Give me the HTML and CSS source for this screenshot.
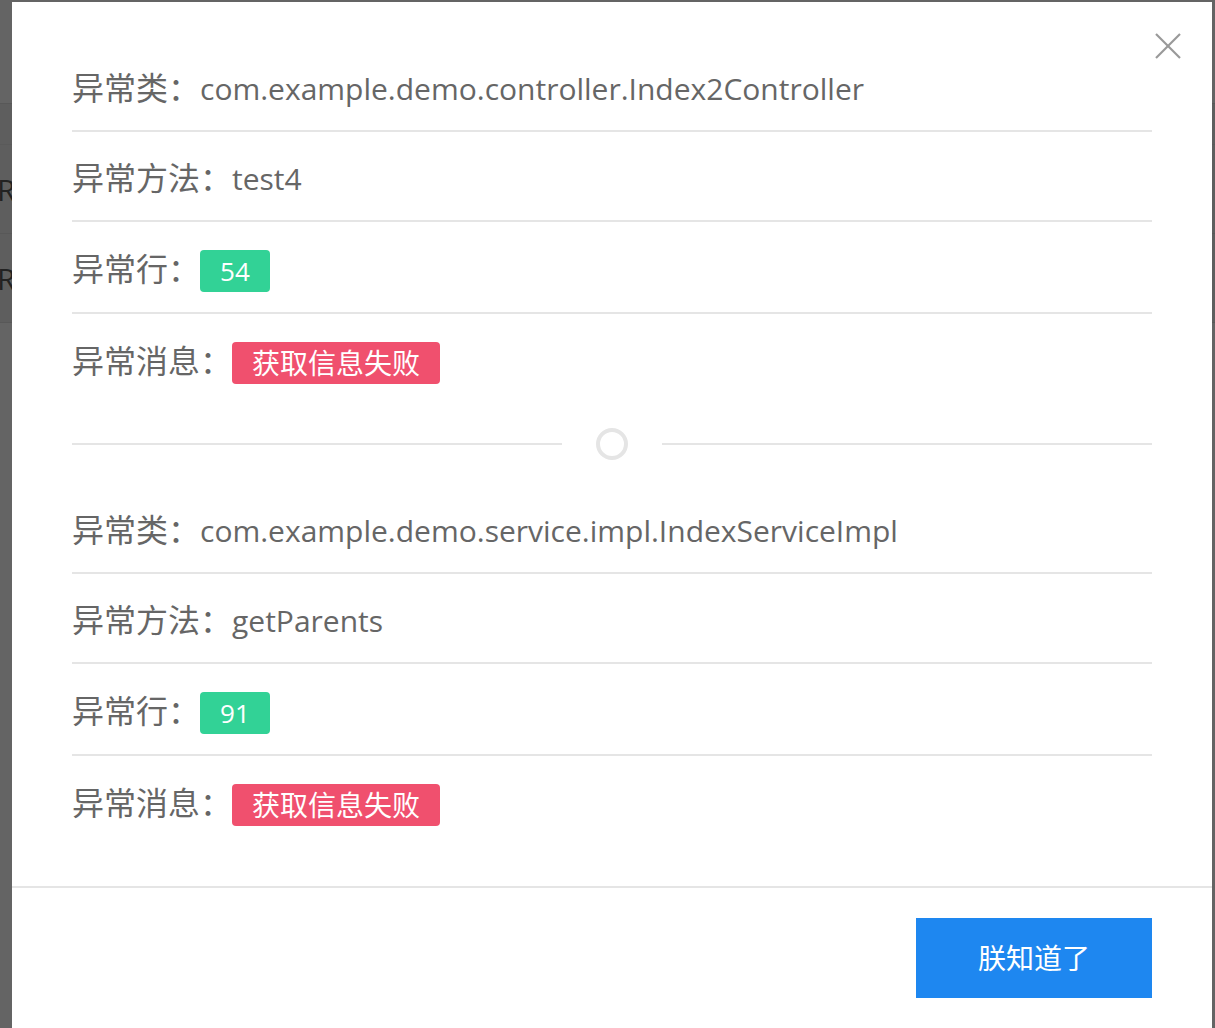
FILE: index.html
```html
<!DOCTYPE html>
<html lang="zh-CN">
<head>
<meta charset="utf-8">
<title>异常信息</title>
<link rel="stylesheet" href="styles.css">
</head>
<body>
<div class="page">
  <div class="page-head"></div>
  <div class="page-thead"></div>
  <div class="page-row"><span class="page-cell">R</span></div>
  <div class="page-row"><span class="page-cell">R</span></div>
</div>
<div class="overlay"></div>
<div class="modal">
  <button class="close" type="button" aria-label="关闭">
    <svg width="28" height="28" viewBox="0 0 14 14"><line x1="1" y1="1" x2="13" y2="13" stroke="currentColor" stroke-width="1.1"/><line x1="13" y1="1" x2="1" y2="13" stroke="currentColor" stroke-width="1.1"/></svg>
  </button>
  <div class="modal-body">
    <ul class="list">
      <li>异常类：<span class="value">com.example.demo.controller.Index2Controller</span></li>
      <li>异常方法：<span class="value">test4</span></li>
      <li class="has-label">异常行：<span class="label success">54</span></li>
      <li class="has-label">异常消息：<span class="label danger">获取信息失败</span></li>
    </ul>
    <div class="divider-icon">
      <span class="line"></span>
      <svg class="ring" width="40" height="40" viewBox="0 0 20 20"><circle cx="10" cy="10" r="7" fill="none" stroke="#e5e5e5" stroke-width="2"/></svg>
      <span class="line"></span>
    </div>
    <ul class="list">
      <li>异常类：<span class="value">com.example.demo.service.impl.IndexServiceImpl</span></li>
      <li>异常方法：<span class="value">getParents</span></li>
      <li class="has-label">异常行：<span class="label success">91</span></li>
      <li class="has-label">异常消息：<span class="label danger">获取信息失败</span></li>
    </ul>
  </div>
  <div class="modal-footer">
    <button class="btn" type="button">朕知道了</button>
  </div>
</div>
</body>
</html>
```
FILE: styles.css
```css
* { box-sizing: border-box; }
html, body { margin: 0; height: 100%; }
body {
  font-family: "Open Sans", "Noto Sans CJK SC", sans-serif;
  background: #fafafa;
  overflow: hidden;
}
.page-head { height: 104px; border-bottom: 1px solid #dcdcdc; }
.page-thead { height: 41px; background: #ececec; border-bottom: 1px solid #e0e0e0; }
.page-row {
  height: 89px;
  background: #ececec;
  border-bottom: 1px solid #dcdcdc;
  display: flex;
  align-items: center;
  font-size: 30px;
  color: #555;
}
.page-cell { text-indent: -3px; }
.overlay {
  position: fixed;
  inset: 0;
  background: rgba(0, 0, 0, 0.6);
}
.modal {
  position: absolute;
  top: 2px;
  left: 12px;
  width: 1200px;
  height: 1100px;
  background: #fff;
}
.close {
  position: absolute;
  top: 20px;
  right: 20px;
  padding: 10px;
  border: 0;
  background: none;
  color: #999;
  line-height: 0;
  cursor: pointer;
}
.modal-body { padding: 60px 60px 58px; }
.list { list-style: none; margin: 0; padding: 0; }
.list li {
  font-size: 32px;
  line-height: 48px;
  height: 50px;
  color: #666;
  padding-top: 2px;
}
.list li + li {
  margin-top: 18px;
  padding-top: 22px;
  height: 72px;
  border-top: 2px solid #e5e5e5;
}
.list li.has-label {
  display: flex;
  align-items: center;
  height: 74px;
}
.value { font-size: 30px; line-height: 30px; }
.label {
  display: inline-block;
  font-size: 28px;
  line-height: 42px;
  padding: 0 20px;
  border-radius: 4px;
  color: #fff;
  margin-top: 4px;
}
.success { background: #32d296; font-size: 26px; }
.danger { background: #f0506e; }
.divider-icon {
  display: flex;
  align-items: center;
  justify-content: space-between;
  height: 40px;
  margin: 38px 0 40px;
}
.divider-icon .line {
  width: calc(50% - 50px);
  border-bottom: 2px solid #e5e5e5;
}
.ring { display: block; }
.modal-footer {
  padding: 30px 60px;
  border-top: 2px solid #e5e5e5;
  text-align: right;
}
.btn {
  font-family: inherit;
  font-size: 28px;
  line-height: 76px;
  padding: 0 60px;
  border: 2px solid transparent;
  background: #1e87f0;
  color: #fff;
  margin: 0;
  cursor: pointer;
}
```
